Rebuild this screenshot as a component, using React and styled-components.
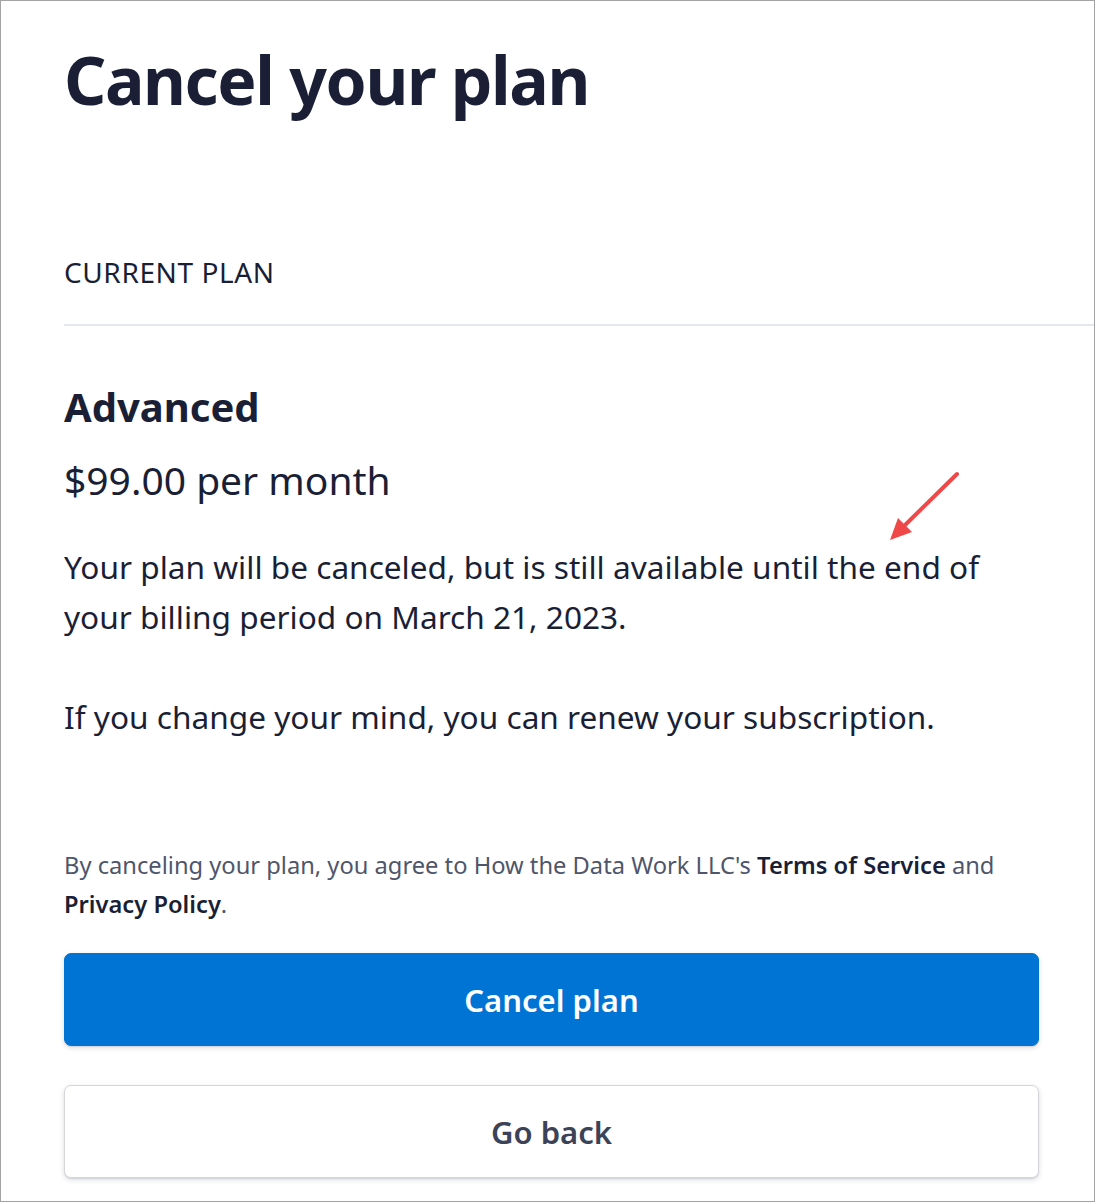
import React from "react";
import styled, { createGlobalStyle } from "styled-components";

const Global = createGlobalStyle`
  html, body { margin: 0; padding: 0; background: #fff; }
  body { font-family: "Noto Sans", "Open Sans", sans-serif; }
  * { box-sizing: border-box; }
`;

const Frame = styled.div`
  position: relative;
  width: 1095px;
  height: 1202px;
  border: 1px solid #a3a3a3;
  overflow: hidden;
  padding: 38px 0 0 63px;
  color: #1a1f36;
`;

const Title = styled.h1`
  margin: 0;
  font-size: 66px;
  font-weight: 700;
  line-height: 80px;
  letter-spacing: -1.4px;
`;

const SectionLabel = styled.div`
  margin-top: 135px;
  font-size: 28px;
  line-height: 36px;
  letter-spacing: 0.6px;
  padding-bottom: 34px;
  border-bottom: 2px solid #e3e8ee;
`;

const Content = styled.div`
  padding-right: 55px;
  display: flex;
  flex-direction: column;
`;

const PlanName = styled.div`
  margin-top: 53px;
  font-size: 40px;
  font-weight: 700;
  line-height: 56px;
`;

const Price = styled.div`
  margin-top: 19px;
  font-size: 39px;
  line-height: 52px;
`;

const Para = styled.p`
  margin: ${(p) => p.$top}px 0 0;
  max-width: 940px;
  font-size: 31.6px;
  line-height: 50px;
`;

const Fine = styled.p`
  margin: 104px 0 0;
  font-size: 23.7px;
  line-height: 39px;
  color: #4f566b;
`;

const Strong = styled.span`
  color: #1a1f36;
  font-weight: 600;
`;

const Button = styled.button`
  display: flex;
  align-items: center;
  justify-content: center;
  width: 100%;
  height: 93px;
  border-radius: 7px;
  font-family: inherit;
  font-size: 31px;
  font-weight: 600;
  cursor: pointer;
  margin-top: ${(p) => p.$top}px;
  background: ${(p) => (p.$primary ? "#0074d4" : "#ffffff")};
  color: ${(p) => (p.$primary ? "#ffffff" : "#3c4257")};
  border: ${(p) => (p.$primary ? "1px solid #0074d4" : "1px solid #d5d6dc")};
  box-shadow: 0 2px 5px rgba(60, 66, 87, 0.18), 0 1px 1px rgba(0, 0, 0, 0.08);
`;

const Arrow = styled.svg`
  position: absolute;
  left: 880px;
  top: 462px;
  width: 90px;
  height: 90px;
`;

export default function App() {
  return (
    <>
      <Global />
      <Frame>
        <Title>Cancel your plan</Title>
        <SectionLabel>CURRENT PLAN</SectionLabel>
        <Content>
          <PlanName>Advanced</PlanName>
          <Price>$99.00 per month</Price>
          <Para $top={36}>
            Your plan will be canceled, but is still available until the end of
            your billing period on March 21, 2023.
          </Para>
          <Para $top={50}>
            If you change your mind, you can renew your subscription.
          </Para>
          <Fine>
            By canceling your plan, you agree to How the Data Work LLC's{" "}
            <Strong>Terms of Service</Strong> and <Strong>Privacy Policy</Strong>.
          </Fine>
          <Button $primary $top={29}>Cancel plan</Button>
          <Button $top={39}>Go back</Button>
        </Content>
        <Arrow viewBox="0 0 90 90">
          <line x1="76" y1="11" x2="20" y2="66" stroke="#f04848" strokeWidth="4" strokeLinecap="round" />
          <polygon points="9,77 17,55 31,69" fill="#f04848" />
        </Arrow>
      </Frame>
    </>
  );
}
